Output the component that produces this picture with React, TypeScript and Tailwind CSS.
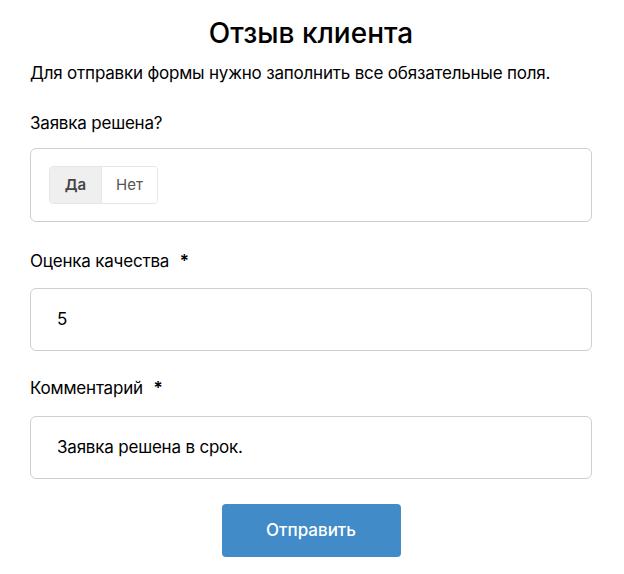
import React, { useState } from 'react';

export default function App() {
  const [resolved, setResolved] = useState(true);

  return (
    <div className="min-h-screen bg-white font-['Inter',sans-serif] text-black">
      <div className="ml-[30px] mr-[32px] pt-[14px]">
        <h1 className="text-center text-[28px] leading-[38px] font-medium">Отзыв клиента</h1>
        <p className="mt-[10px] text-[17px] leading-[22px] tracking-[-0.2px]">
          Для отправки формы нужно заполнить все обязательные поля.
        </p>

        <div className="mt-[28px] text-[17px] leading-[22px] tracking-[-0.2px]">Заявка решена?</div>
        <div className="mt-[14px] h-[74px] rounded-[6px] border border-[#cfcfcf] flex items-center px-[18px]">
          <div className="flex h-[38px] rounded-[4px] border border-[#e6e6e6] overflow-hidden text-[15px]">
            <button
              onClick={() => setResolved(true)}
              className={`w-[51px] ${resolved ? 'bg-[#efefef] font-semibold text-[#444]' : 'bg-white text-[#555]'}`}
            >
              Да
            </button>
            <button
              onClick={() => setResolved(false)}
              className={`w-[56px] border-l border-[#e6e6e6] ${!resolved ? 'bg-[#efefef] font-semibold text-[#444]' : 'bg-white text-[#555]'}`}
            >
              Нет
            </button>
          </div>
        </div>

        <div className="mt-[28px] text-[17px] leading-[22px] tracking-[-0.2px]">
          Оценка качества <span className="ml-[6px] font-semibold">*</span>
        </div>
        <div className="mt-[16px] h-[63px] rounded-[6px] border border-[#cfcfcf] flex items-center px-[26px] text-[17px] tracking-[-0.2px]">
          5
        </div>

        <div className="mt-[26px] text-[17px] leading-[22px] tracking-[-0.2px]">
          Комментарий <span className="ml-[6px] font-semibold">*</span>
        </div>
        <div className="mt-[17px] h-[63px] rounded-[6px] border border-[#cfcfcf] flex items-center px-[26px] text-[17px] tracking-[-0.2px]">
          Заявка решена в срок.
        </div>

        <div className="mt-[25px] flex justify-center">
          <button className="w-[179px] h-[53px] rounded-[4px] bg-[#418cc8] text-white text-[17px] font-medium">
            Отправить
          </button>
        </div>
      </div>
    </div>
  );
}
